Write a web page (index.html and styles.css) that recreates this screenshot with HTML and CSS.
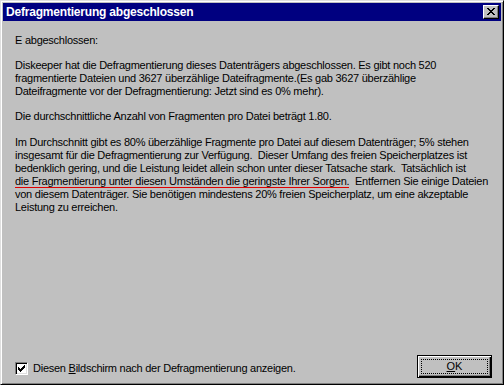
FILE: index.html
```html
<!DOCTYPE html>
<html lang="de">
<head>
<meta charset="utf-8">
<title>Defragmentierung abgeschlossen</title>
<link rel="stylesheet" href="styles.css">
</head>
<body>
<div class="window">
  <div class="titlebar">
    <span class="title">Defragmentierung abgeschlossen</span>
    <button class="close" aria-label="Schließen">
      <svg width="8" height="7" viewBox="0 0 8 7" shape-rendering="crispEdges">
        <path fill="#000" d="M0 0h2v1h-2zM6 0h2v1h-2zM1 1h2v1h-2zM5 1h2v1h-2zM2 2h4v1h-4zM3 3h2v1h-2zM2 4h4v1h-4zM1 5h2v1h-2zM5 5h2v1h-2zM0 6h2v1h-2zM6 6h2v1h-2z"/>
      </svg>
    </button>
  </div>
  <div class="body">
    <div class="content">
      <p class="p1">E abgeschlossen:</p>
      <p class="p2">Diskeeper hat die Defragmentierung dieses Datenträgers abgeschlossen. Es gibt noch 520<br>fragmentierte Dateien und 3627 überzählige Dateifragmente.(Es gab 3627 überzählige<br>Dateifragmente vor der Defragmentierung: Jetzt sind es 0% mehr).</p>
      <p class="p3">Die durchschnittliche Anzahl von Fragmenten pro Datei beträgt 1.80.</p>
      <p class="p4">Im Durchschnitt gibt es 80% überzählige Fragmente pro Datei auf diesem Datenträger; 5% stehen<br>insgesamt für die Defragmentierung zur Verfügung.&nbsp; Dieser Umfang des freien Speicherplatzes ist<br>bedenklich gering, und die Leistung leidet allein schon unter dieser Tatsache stark.&nbsp; Tatsächlich ist<br><span class="mark">die Fragmentierung unter diesen Umständen die geringste Ihrer Sorgen.</span>&nbsp; Entfernen Sie einige Dateien<br>von diesem Datenträger. Sie benötigen mindestens 20% freien Speicherplatz, um eine akzeptable<br>Leistung zu erreichen.</p>
    </div>
    <div class="footer">
      <label class="check">
        <span class="box">
          <svg width="7" height="7" viewBox="0 0 7 7" shape-rendering="crispEdges">
            <path fill="#000" d="M6 0h1v3h-1zM5 1h1v3h-1zM4 2h1v3h-1zM3 3h1v3h-1zM2 4h1v3h-1zM1 3h1v3h-1zM0 2h1v3h-1z"/>
          </svg>
        </span>
        <span class="label">Diesen <u>B</u>ildschirm nach der Defragmentierung anzeigen.</span>
      </label>
      <button class="ok"><span class="focus"><u>O</u>K</span></button>
    </div>
  </div>
</div>
</body>
</html>
```
FILE: styles.css
```css
* { box-sizing: border-box; }
html, body { margin: 0; padding: 0; }
body {
  background: #c0c0c0;
  font-family: "Liberation Sans", Arial, sans-serif;
  font-size: 11px;
  color: #000;
}
.window {
  width: 504px;
  height: 385px;
  display: flex;
  flex-direction: column;
  background: #c0c0c0;
  border: 1px solid;
  border-color: #dfdfdf #000 #000 #dfdfdf;
  box-shadow: inset 1px 1px 0 #fff, inset -1px -1px 0 #808080;
  padding: 2px;
}
.titlebar {
  height: 18px;
  background: #000080;
  display: flex;
  align-items: center;
  justify-content: space-between;
  padding: 0 2px 0 3px;
  flex: none;
}
.title {
  color: #fff;
  font-weight: bold;
  font-size: 12px;
  letter-spacing: -0.2px;
}
.close {
  width: 16px;
  height: 14px;
  padding: 0;
  margin: 0;
  background: #c0c0c0;
  border: 1px solid;
  border-color: #fff #000 #000 #fff;
  box-shadow: inset -1px -1px 0 #808080;
  display: flex;
  align-items: center;
  justify-content: center;
}
.close svg { display: block; margin: 0 1px 1px 0; }
.body {
  flex: 1;
  display: flex;
  flex-direction: column;
  padding: 13px 12px 0 12px;
}
.content { flex: 1; }
.content p {
  margin: 0;
  line-height: 13px;
  white-space: nowrap;
  letter-spacing: -0.25px;
}
.p1 { margin-bottom: 12px !important; }
.p2 { margin-bottom: 12px !important; }
.p3 { margin-bottom: 13px !important; }
.mark { border-bottom: 1px solid #e00000; }
.footer {
  display: flex;
  align-items: center;
  justify-content: space-between;
  height: 28px;
  margin: 0 -3px 2px 0;
}
.check {
  display: flex;
  align-items: center;
  gap: 5px;
  margin-top: 4px;
}
.box {
  width: 13px;
  height: 13px;
  background: #fff;
  border: 1px solid;
  border-color: #808080 #fff #fff #808080;
  box-shadow: inset 1px 1px 0 #000, inset -1px -1px 0 #dfdfdf;
  display: flex;
  align-items: center;
  justify-content: center;
}
.box svg { display: block; }
.label { letter-spacing: -0.25px; }
.ok {
  width: 75px;
  height: 23px;
  padding: 3px;
  margin: 0;
  font: inherit;
  background: #c0c0c0;
  border: 1px solid #000;
  box-shadow: inset 1px 1px 0 #fff, inset -1px -1px 0 #000, inset -2px -2px 0 #808080;
  display: flex;
}
.focus {
  flex: 1;
  border: 1px dotted #000;
  display: flex;
  align-items: center;
  justify-content: center;
  line-height: 11px;
}
```
